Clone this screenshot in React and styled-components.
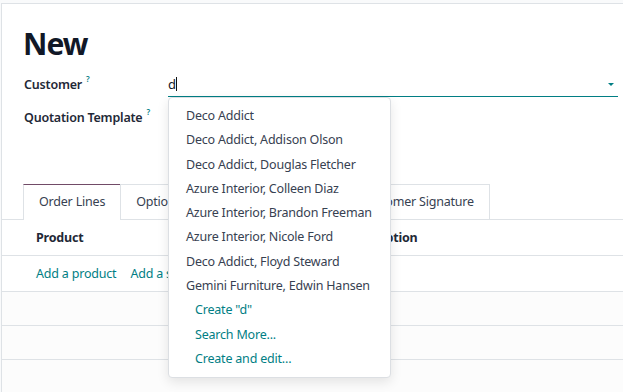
import React from 'react'
import styled, { createGlobalStyle } from 'styled-components'

const Global = createGlobalStyle`
  body {
    margin: 0;
    background: #f9fafb;
    font-family: 'Noto Sans', 'Open Sans', sans-serif;
    letter-spacing: -0.2px;
    color: #374151;
  }
`

const Sheet = styled.div`
  margin-top: 3px;
  margin-left: 1px;
  border-top: 1px solid #dee2e6;
  border-left: 1px solid #dee2e6;
  background: #fff;
  height: 388px;
  position: relative;
  overflow: hidden;
`

const Title = styled.h1`
  margin: 0;
  padding: 21px 0 0 21px;
  font-size: 30px;
  font-weight: 700;
  letter-spacing: -1px;
  color: #111827;
  line-height: 38px;
`

const Fields = styled.div`
  padding: 9px 5px 0 22px;
  display: grid;
  grid-template-columns: 144px 1fr;
  grid-auto-rows: 25px;
  row-gap: 8px;
`

const Label = styled.label`
  font-size: 12.5px;
  font-weight: 600;
  color: #1f2937;
  line-height: 25px;
  sup {
    color: #017e84;
    font-size: 8px;
    line-height: 0;
    margin-left: 4px;
    position: relative;
    top: -2px;
  }
`

const InputWrap = styled.div`
  position: relative;
  height: 24px;
  border-bottom: 1px solid ${p => (p.$focus ? '#017e84' : 'transparent')};
`

const Input = styled.div`
  font-size: 13px;
  line-height: 24px;
  color: #111827;
  span {
    display: inline-block;
    width: 1px;
    height: 14px;
    background: #111;
    vertical-align: -2px;
  }
`

const Caret = styled.div`
  position: absolute;
  right: 4px;
  top: 11px;
  border-left: 3px solid transparent;
  border-right: 3px solid transparent;
  border-top: 3px solid #017e84;
`

const Menu = styled.ul`
  position: absolute;
  top: 25px;
  left: 0;
  width: 221px;
  margin: 0;
  padding: 6px 0 6px;
  list-style: none;
  background: #fff;
  border: 1px solid #dcdfe3;
  border-radius: 4px;
  box-shadow: 0 4px 12px rgba(0, 0, 0, 0.1);
  z-index: 10;
`

const Item = styled.li`
  font-size: 12.5px;
  line-height: 24.3px;
  padding-left: ${p => (p.$action ? '26px' : '17px')};
  color: ${p => (p.$action ? '#017e84' : '#374151')};
  white-space: nowrap;
`

const Tabs = styled.div`
  display: flex;
  margin-top: 54px;
  padding-left: 21px;
  border-bottom: 1px solid #dee2e6;
`

const Tab = styled.div`
  padding: 0 15px;
  height: ${p => (p.$active ? '35px' : '34px')};
  line-height: 34px;
  font-size: 12.5px;
  color: #374151;
  border: 1px solid #dee2e6;
  border-top: 1px solid ${p => (p.$active ? '#714b67' : '#dee2e6')};
  border-bottom: none;
  margin-bottom: ${p => (p.$active ? '-1px' : '0')};
  background: #fff;
  margin-left: -1px;
  &:first-child {
    margin-left: 0;
  }
`

const Row = styled.div`
  display: flex;
  align-items: center;
  height: ${p => (p.$empty ? '33px' : '35px')};
  border-bottom: 1px solid #dee2e6;
  background: ${p => (p.$empty ? '#fcfcfc' : '#fff')};
  padding-left: 34px;
  font-size: 12.5px;
`

const Head = styled.div`
  font-weight: 700;
  color: #1f2937;
  width: ${p => p.$w || 'auto'};
`

const Link = styled.a`
  color: #017e84;
  margin-right: 14px;
`

const Rest = styled.div`
  background: #fcfcfc;
  height: 60px;
`

const customers = [
  'Deco Addict',
  'Deco Addict, Addison Olson',
  'Deco Addict, Douglas Fletcher',
  'Azure Interior, Colleen Diaz',
  'Azure Interior, Brandon Freeman',
  'Azure Interior, Nicole Ford',
  'Deco Addict, Floyd Steward',
  'Gemini Furniture, Edwin Hansen',
]

const App = () => {
  return (
    <>
      <Global />
      <Sheet>
        <Title>New</Title>
        <Fields>
          <Label>
            Customer<sup>?</sup>
          </Label>
          <InputWrap $focus>
            <Input>
              d<span />
            </Input>
            <Caret />
            <Menu>
              {customers.map(c => (
                <Item key={c}>{c}</Item>
              ))}
              <Item $action>Create "d"</Item>
              <Item $action>Search More...</Item>
              <Item $action>Create and edit...</Item>
            </Menu>
          </InputWrap>
          <Label>
            Quotation Template<sup>?</sup>
          </Label>
          <InputWrap />
        </Fields>
        <Tabs>
          <Tab $active>Order Lines</Tab>
          <Tab>Optional Products</Tab>
          <Tab>Other Info</Tab>
          <Tab>Customer Signature</Tab>
        </Tabs>
        <Row>
          <Head $w="312px">Product</Head>
          <Head>Description</Head>
        </Row>
        <Row>
          <Link>Add a product</Link>
          <Link>Add a section</Link>
          <Link>Add a note</Link>
        </Row>
        <Row $empty />
        <Row $empty />
        <Rest />
      </Sheet>
    </>
  )
}

export default App
